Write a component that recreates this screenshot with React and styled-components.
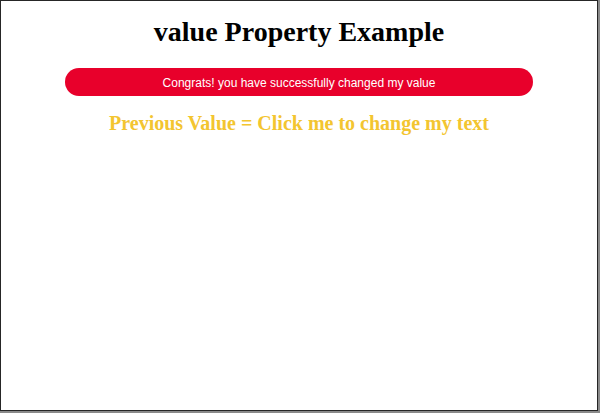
import React, { useState } from 'react';
import styled, { createGlobalStyle } from 'styled-components';

const GlobalStyle = createGlobalStyle`
	html, body {
		margin: 0;
		padding: 0;
		background: #8a8a8a;
	}
	body {
		width: 600px;
		height: 413px;
		overflow: hidden;
	}
`;

const Frame = styled.div`
	box-sizing: border-box;
	width: 598px;
	height: 411px;
	border: 1px solid #262626;
	background: #ffffff;
	display: flex;
	flex-direction: column;
	align-items: center;
	padding-top: 15px;
`;

const Title = styled.h1`
	margin: 0;
	font-family: 'Liberation Serif', 'Times New Roman', serif;
	font-weight: bold;
	font-size: 28px;
	color: #000000;
`;

const ValueButton = styled.button`
	box-sizing: border-box;
	margin-top: 20px;
	width: 468px;
	height: 28px;
	border: none;
	border-radius: 14px;
	background: #e8002b;
	color: #ffffff;
	font-family: 'Liberation Sans', Arial, sans-serif;
	font-size: 12px;
	cursor: pointer;
	padding: 1px 0 0;
`;

const Previous = styled.h3`
	margin: 16px 0 0;
	font-family: 'Liberation Serif', 'Times New Roman', serif;
	font-weight: bold;
	font-size: 20px;
	color: #f3c530;
`;

export default function App() {
	const [value, setValue] = useState('Congrats! you have successfully changed my value');
	const [previous, setPrevious] = useState('Click me to change my text');

	function handleClick() {
		setPrevious(value);
		setValue(previous);
	}

	return (
		<>
			<GlobalStyle />
			<Frame>
				<Title>value Property Example</Title>
				<ValueButton onClick={handleClick}>{value}</ValueButton>
				<Previous>Previous Value = {previous}</Previous>
			</Frame>
		</>
	);
}
